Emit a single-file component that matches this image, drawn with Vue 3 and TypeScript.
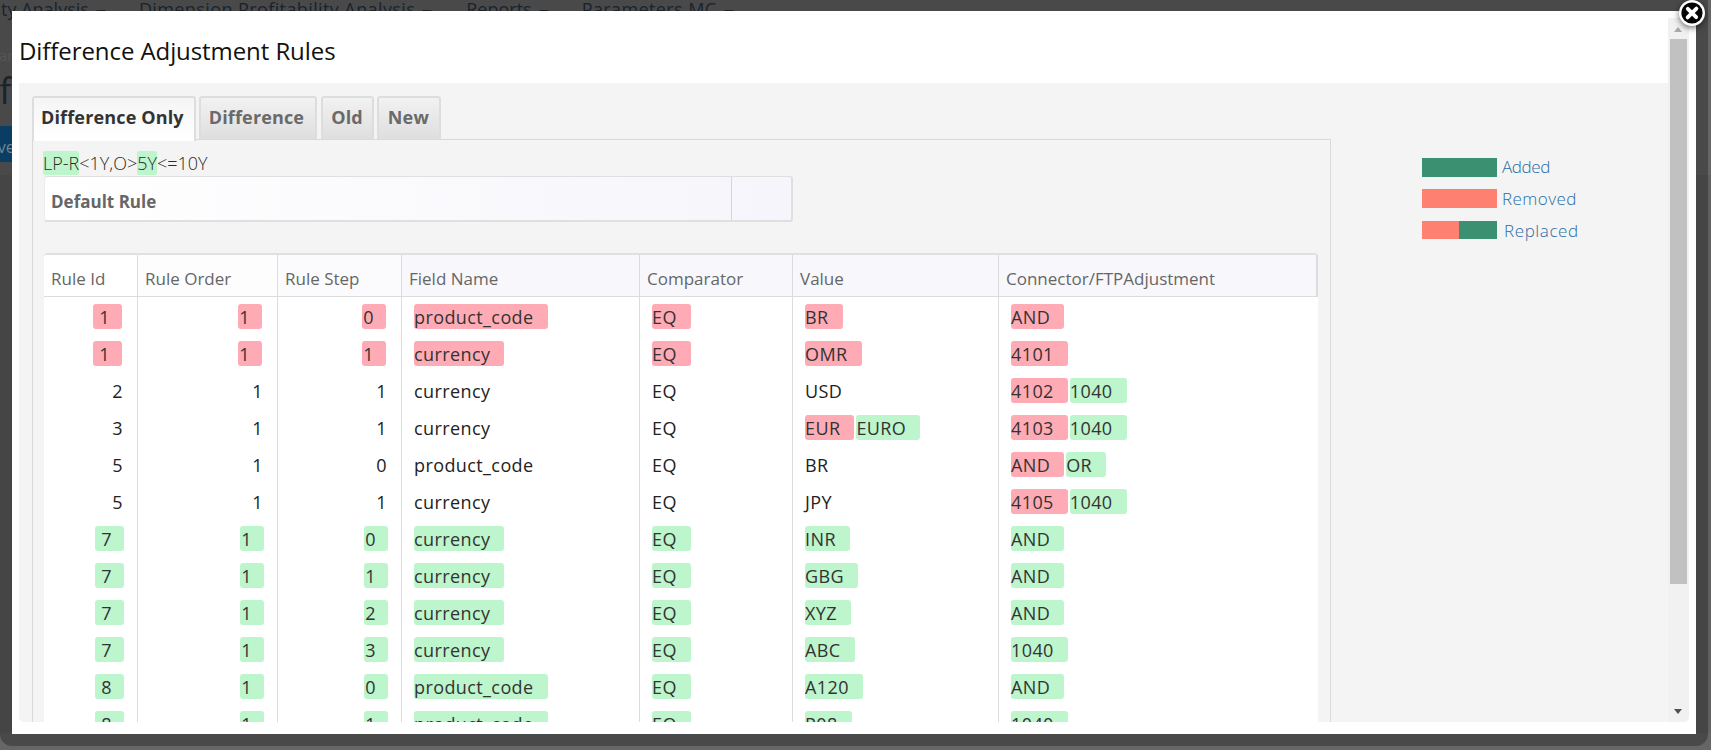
<script setup lang="ts">
type Kind = 'del' | 'ins' | 'plain'
interface Seg { t: string; k: Kind }
type Cell = Seg[]

const p = (t: string): Seg => ({ t, k: 'plain' })
const d = (t: string): Seg => ({ t, k: 'del' })
const i = (t: string): Seg => ({ t, k: 'ins' })

function row(kind: Kind, id: string, order: string, step: string, field: string, value: Cell, conn: Cell): Cell[] {
  const m = (t: string): Cell => [{ t, k: kind }]
  return [m(id), m(order), m(step), m(field), m('EQ'), value, conn]
}

const headers = ['Rule Id', 'Rule Order', 'Rule Step', 'Field Name', 'Comparator', 'Value', 'Connector/FTPAdjustment']
const tabs = ['Difference Only', 'Difference', 'Old', 'New']

const rows: Cell[][] = [
  row('del', '1', '1', '0', 'product_code', [d('BR')], [d('AND')]),
  row('del', '1', '1', '1', 'currency', [d('OMR')], [d('4101')]),
  row('plain', '2', '1', '1', 'currency', [p('USD')], [d('4102'), i('1040')]),
  row('plain', '3', '1', '1', 'currency', [d('EUR'), i('EURO')], [d('4103'), i('1040')]),
  row('plain', '5', '1', '0', 'product_code', [p('BR')], [d('AND'), i('OR')]),
  row('plain', '5', '1', '1', 'currency', [p('JPY')], [d('4105'), i('1040')]),
  row('ins', '7', '1', '0', 'currency', [i('INR')], [i('AND')]),
  row('ins', '7', '1', '1', 'currency', [i('GBG')], [i('AND')]),
  row('ins', '7', '1', '2', 'currency', [i('XYZ')], [i('AND')]),
  row('ins', '7', '1', '3', 'currency', [i('ABC')], [i('1040')]),
  row('ins', '8', '1', '0', 'product_code', [i('A120')], [i('AND')]),
  row('ins', '8', '1', '1', 'product_code', [i('P08')], [i('1040')]),
]
</script>

<template>
  <div class="page">
    <nav class="topnav">
      <span class="nav-item first">Liquidity Analysis<i class="caret"></i></span>
      <span class="nav-item">Dimension Profitability Analysis<i class="caret"></i></span>
      <span class="nav-item tight">Reports<i class="caret"></i></span>
      <span class="nav-item">Parameters MC<i class="caret"></i></span>
    </nav>
    <div class="crumb">Par</div>
    <div class="pagetitle">Defi</div>
    <div class="pagebtn">Save</div>
    <div class="pagerule"></div>

    <div class="frame">
      <div class="modal">
        <div class="scroller">
          <div class="scroll-content">
            <h4 class="title">Difference Adjustment Rules</h4>
            <div class="body">
              <section class="main">
                <ul class="tabs">
                  <li v-for="(t, n) in tabs" :key="t" class="tab" :class="{ active: n === 0 }">{{ t }}</li>
                </ul>
                <div class="panel">
                  <div class="path"><span class="hl">LP-R</span>&lt;1Y,O&gt;<span class="hl">5Y</span>&lt;=10Y</div>
                  <div class="defaultrule">
                    <div class="dr-name">Default Rule</div>
                    <div class="dr-side"></div>
                  </div>
                  <table class="rules">
                    <colgroup>
                      <col class="c1" /><col class="c2" /><col class="c3" /><col class="c4" /><col class="c5" /><col class="c6" /><col class="c7" />
                    </colgroup>
                    <thead>
                      <tr><th v-for="h in headers" :key="h">{{ h }}</th></tr>
                    </thead>
                    <tbody>
                      <tr v-for="(r, ri) in rows" :key="ri">
                        <td v-for="(c, ci) in r" :key="ci" :class="['col' + ci, { num: ci < 3 }]">
                          <span v-for="(s, si) in c" :key="si" :class="s.k">{{ s.t }}</span>
                        </td>
                      </tr>
                    </tbody>
                  </table>
                </div>
              </section>
              <aside class="legend">
                <div class="lg-row"><span class="swatch green"></span><a class="lg-label l1">Added</a></div>
                <div class="lg-row"><span class="swatch red"></span><a class="lg-label l2">Removed</a></div>
                <div class="lg-row short"><span class="swatch split"><b></b><b></b></span><a class="lg-label l3">Replaced</a></div>
              </aside>
            </div>
          </div>
          <div class="scrollbar">
            <span class="arrow up"></span>
            <span class="thumb"></span>
            <span class="arrow down"></span>
          </div>
        </div>
      </div>
      <button class="close" aria-label="Close">
        <svg width="32" height="32" viewBox="0 0 32 32">
          <circle cx="16" cy="16" r="13" fill="#fff" />
          <circle cx="16" cy="16" r="10.6" fill="#050505" />
          <path d="M11.8 11.8 L20.2 20.2 M20.4 11.6 L11.6 20.4" stroke="#fff" stroke-width="3.8" stroke-linecap="round" />
        </svg>
      </button>
    </div>
  </div>
</template>

<style>
html, body { margin: 0; background: #666; }
</style>

<style scoped>
.page {
  position: relative;
  width: 1711px;
  height: 750px;
  overflow: hidden;
  background: #666;
  font-family: "Open Sans", "Liberation Sans", sans-serif;
  font-size: 18px;
  color: #222;
}
.topnav {
  display: flex;
  gap: 33px;
  height: 42px;
  font-size: 18px;
  letter-spacing: .4px;
  line-height: 18px;
  color: #25313d;
  white-space: nowrap;
}
.nav-item { display: inline-flex; align-items: flex-start; flex: none; }
.first { margin-left: -55px; letter-spacing: 0; }
.tight { letter-spacing: 0; margin-left: 1px; }
.caret {
  display: block;
  width: 0;
  height: 0;
  margin: 10px 0 0 7px;
  border-left: 5px solid transparent;
  border-right: 5px solid transparent;
  border-top: 5px solid #25313d;
}
.crumb {
  height: 26px;
  margin-left: -10px;
  font-size: 15px;
  line-height: 26px;
  color: #777;
}
.pagetitle {
  height: 58px;
  margin-left: -47px;
  font-size: 36px;
  line-height: 46px;
  color: #25313d;
}
.pagebtn {
  width: 40px;
  height: 36px;
  margin-left: -48px;
  padding-left: 28px;
  background: #0e5589;
  font-size: 16px;
  line-height: 42px;
  color: #9fb8cc;
}
.pagerule { height: 13px; background: #6f6f6f; }
.pagerule::after { content: ""; display: block; height: 558px; margin-top: 13px; background: #606060; }

.frame {
  position: absolute;
  left: 0;
  top: 0;
  width: 1708px;
  height: 746px;
  box-sizing: border-box;
  padding: 11px 12px 12px;
  background: rgba(0, 0, 0, .28);
  border-radius: 0 0 12px 12px;
  display: flex;
}
.modal {
  flex: 1;
  min-width: 0;
  box-sizing: border-box;
  padding: 7px 7px 12px;
  background: #fff;
  display: flex;
}
.scroller {
  flex: 1;
  min-width: 0;
  display: flex;
  overflow: hidden;
  border-radius: 0 0 5px 5px;
}
.scroll-content {
  flex: 1;
  min-width: 0;
  overflow: hidden;
}
.title {
  margin: 0;
  height: 65px;
  box-sizing: border-box;
  padding: 15px 0 0 0;
  font-size: 24px;
  letter-spacing: -.08px;
  line-height: 36px;
  font-weight: 400;
  color: #111;
}
.body {
  display: flex;
  height: 639px;
  background: #f4f4f4;
  padding-top: 13px;
  box-sizing: border-box;
}
.main { flex: none; width: 1299px; margin-left: 13px; }
.tabs {
  display: flex;
  gap: 4px;
  list-style: none;
  margin: 0;
  padding: 0;
  height: 43px;
}
.tab {
  box-sizing: border-box;
  height: 43px;
  padding: 0 11px 0 8px;
  border: 2px solid #ddd;
  border-bottom: 0;
  border-radius: 3px 3px 0 0;
  background: linear-gradient(#f2f2f2, #dedede);
  font-weight: 700;
  letter-spacing: .15px;
  line-height: 38px;
  color: #6a6a6a;
  position: relative;
}
.tab:nth-child(3) { padding: 0 9px 0 8px; margin-right: -1px; }
.tab:nth-child(4) { padding: 0 10px 0 9px; }
.tab.active {
  height: 45px;
  padding: 0 10px 0 7px;
  margin-right: -1px;
  background: linear-gradient(#f5f5f5, #fff);
  color: #333;
  z-index: 1;
}
.panel {
  box-sizing: border-box;
  height: 640px;
  border: 1px solid #d9d9d9;
  border-width: 1px 1px 0;
  padding: 11px 11px 0 11px;
}
.path {
  height: 25px;
  margin-left: -1px;
  font-weight: 300;
  line-height: 24px;
  color: #2b2b2b;
}
.hl { display: inline-block; height: 24px; background: #bdf5cc; border-radius: 2px; }
.defaultrule {
  display: flex;
  width: 749px;
  height: 46px;
  box-sizing: border-box;
  border: solid #dfdfdf;
  border-width: 1px 2px 2px 1px;
  border-left-color: #ececec;
  border-radius: 3px;
  background: linear-gradient(90deg, #fff, #f5f5fb);
}
.dr-name {
  flex: 1;
  padding-left: 6px;
  font-size: 17px;
  font-weight: 700;
  line-height: 50px;
  height: 43px;
  color: #666;
}
.dr-side { width: 59px; border-left: 1px solid #d6d6d6; }
.rules {
  width: 1274px;
  margin-top: 31px;
  table-layout: fixed;
  border-collapse: separate;
  border-spacing: 0;
  background: #fff;
}
.c1 { width: 94px; }
.c2 { width: 140px; }
.c3 { width: 124px; }
.c4 { width: 238px; }
.c5 { width: 153px; }
.c6 { width: 206px; }
.c7 { width: 319px; }
th {
  box-sizing: border-box;
  height: 44px;
  padding: 6px 8px 0 7px;
  text-align: left;
  font-size: 17px;
  font-weight: 400;
  color: #666;
  white-space: nowrap;
  background: #f8f8fc;
  border-top: 2px solid #e0e0e0;
  border-bottom: 1px solid #dcdcdc;
  border-right: 1px solid #dcdcdc;
}
th:first-child { background: #fff; border-radius: 3px 0 0 0; }
th:nth-child(2) { background: #fdfdfe; }
th:nth-child(3) { background: #fbfbfd; }
th:last-child { border-right: 2px solid #dcdcdc; border-radius: 0 3px 0 0; }
td {
  box-sizing: border-box;
  height: 37px;
  padding: 0 0 0 12px;
  border-right: 1px solid #dcdcdc;
  white-space: nowrap;
  letter-spacing: .4px;
  line-height: 27px;
}
td:last-child { border-right: 0; }
td.num { text-align: right; padding: 0 14px 0 0; }
.plain, .del, .ins {
  display: inline-block;
  height: 25px;
  vertical-align: middle;
}
.del, .ins {
  border-radius: 3px;
  padding: 0 14px 0 0;
  color: #333;
}
.del { background: #ffabb5; }
.ins { background: #bdf5cc; margin-left: 2px; }
td:not(.num) .ins:first-child { margin-left: 0; }
td.num .del { margin-right: 1px; padding: 0 12px 0 1px; }
td.num .ins { margin-right: -1px; margin-left: 0; padding: 0 12px 0 1px; }
td.num.col0 .del, td.num.col0 .ins { padding-left: 6px; }

.legend {
  flex: none;
  margin-left: 91px;
  padding-top: 62px;
  display: flex;
  flex-direction: column;
  gap: 12px;
}
.lg-row {
  display: flex;
  align-items: center;
  height: 19px;
}
.short { height: 18px; margin-top: 1px; }
.swatch { display: flex; width: 75px; height: 100%; flex: none; }
.green { background: #3a9070; }
.red { background: #fe8070; }
.split b:first-child { width: 37px; background: #fe8070; }
.split b:last-child { flex: 1; background: #3a9070; }
.lg-label {
  margin-left: 5px;
  font-size: 17px;
  font-weight: 300;
  color: #2a6ca8;
  white-space: nowrap;
}
.l1 { letter-spacing: -.4px; margin-top: -2px; }
.l2 { letter-spacing: .45px; }
.l3 { margin-left: 7px; letter-spacing: .6px; }

.scrollbar {
  flex: none;
  position: relative;
  width: 21px;
  background: #f1f1f1;
}
.thumb {
  position: absolute;
  left: 2px;
  top: 21px;
  width: 17px;
  height: 545px;
  background: #c1c1c1;
}
.arrow {
  position: absolute;
  left: 6px;
  width: 0;
  height: 0;
  border-left: 4.5px solid transparent;
  border-right: 4.5px solid transparent;
}
.up { top: 9px; border-bottom: 5px solid #a8a8a8; }
.down { bottom: 8px; border-top: 5px solid #505050; }

.close {
  position: absolute;
  left: 1676px;
  top: -3px;
  width: 32px;
  height: 32px;
  padding: 0;
  border: 0;
  background: none;
  filter: drop-shadow(0 2px 3px rgba(0, 0, 0, .55));
}
.close svg { display: block; }
</style>
